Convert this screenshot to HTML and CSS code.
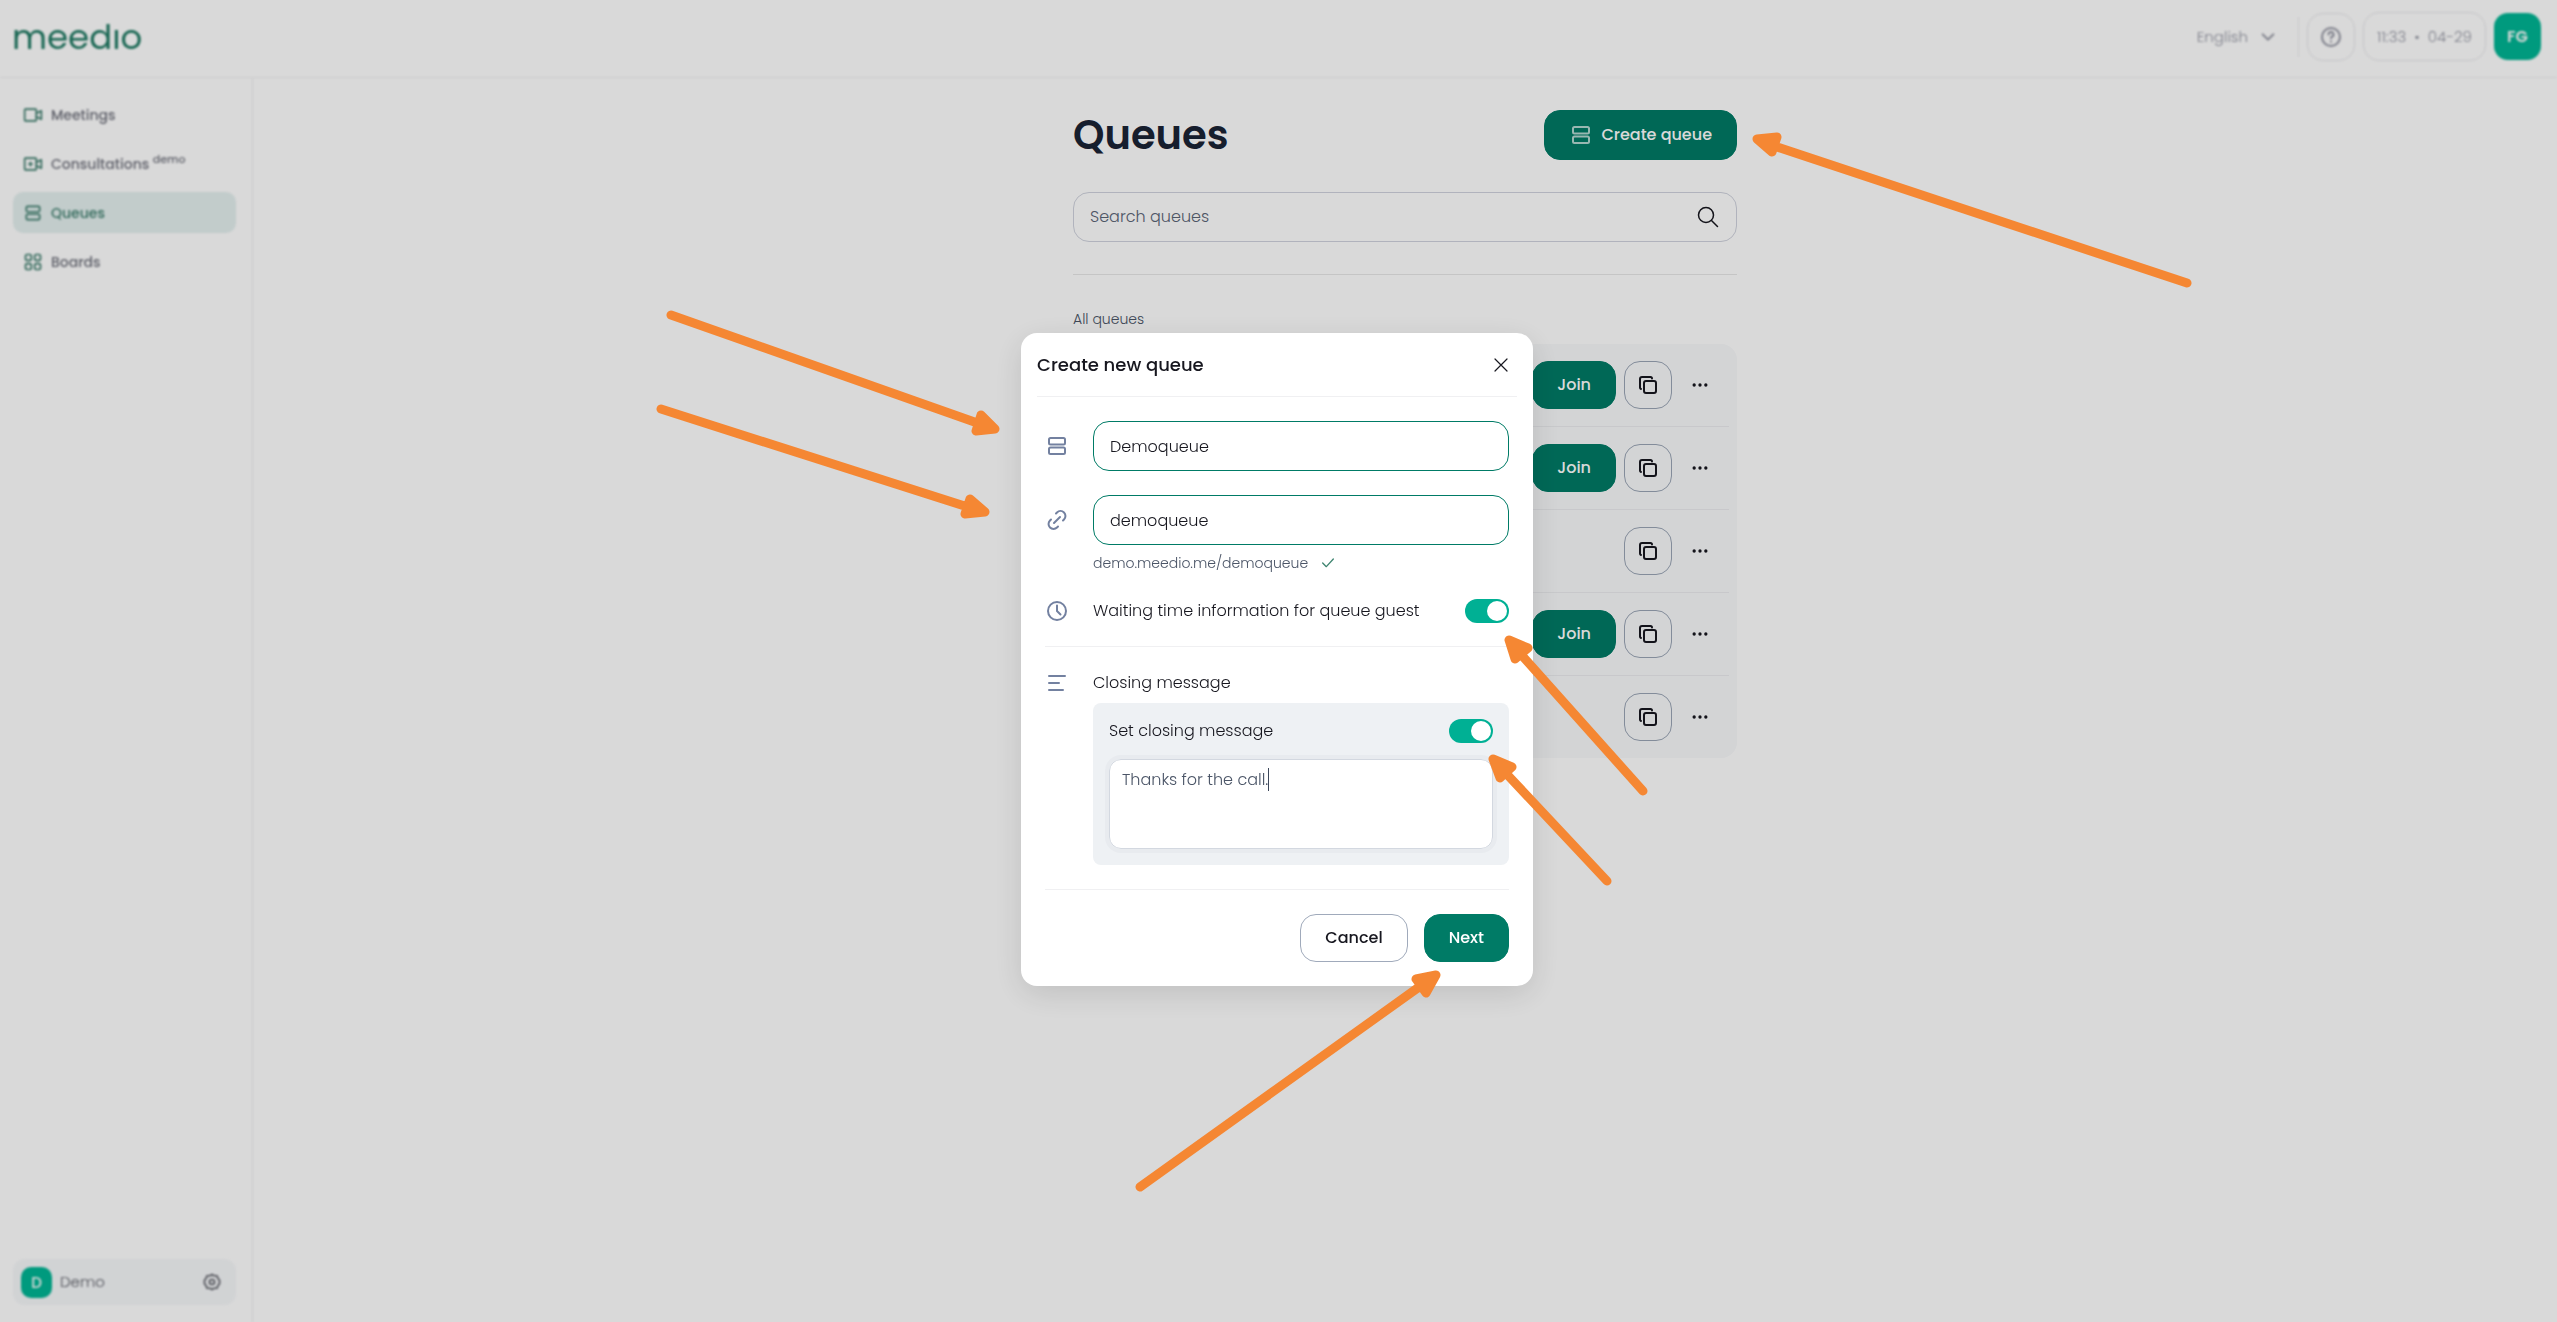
FILE: index.html
```html
<!DOCTYPE html>
<html lang="en">
<head>
<meta charset="utf-8">
<title>Queues</title>
<link rel="stylesheet" href="styles.css">
</head>
<body>
<svg class="defs" aria-hidden="true">
  <symbol id="i-queue" viewBox="0 0 24 24"><rect x="4" y="4" width="16" height="6.500" rx="1.500"/><rect x="4" y="13.500" width="16" height="6.500" rx="1.500"/></symbol>
  <symbol id="i-copy" viewBox="0 0 24 24"><rect x="8" y="8" width="12" height="12" rx="2"/><path d="M5 16a1.500 1.500 0 0 1-1-1.500V6a2 2 0 0 1 2-2h8.500A1.500 1.500 0 0 1 16 5.500"/></symbol>
  <symbol id="i-dots" viewBox="0 0 24 24"><circle cx="5" cy="12" r="1"/><circle cx="12" cy="12" r="1"/><circle cx="19" cy="12" r="1"/></symbol>
</svg>
<div class="page">
  <header class="topbar">
    <a class="logo" href="#">meedıo</a>
    <div class="tools">
      <button class="language" type="button">English
        <svg class="icon s16" viewBox="0 0 24 24"><path d="M4 8l8 8 8-8"/></svg>
      </button>
      <button class="help" type="button" aria-label="Help">
        <svg class="icon s24" viewBox="0 0 24 24"><circle cx="12" cy="12" r="9"/><path d="M9.500 9.500a2.500 2.500 0 1 1 3.600 2.200c-.8.400-1.100.8-1.100 1.600M12 16.500v.2"/></svg>
      </button>
      <div class="clock"><span>11:33</span><span>•</span><span>04-29</span></div>
      <button class="avatar" type="button">FG</button>
    </div>
  </header>
  <aside class="sidebar">
    <nav class="nav">
      <a class="item" href="#"><svg class="icon s20" viewBox="0 0 24 24"><rect x="2" y="5" width="14" height="14" rx="1"/><path d="M16 10l6-3v10l-6-3"/></svg>Meetings</a>
      <a class="item" href="#"><svg class="icon s20" viewBox="0 0 24 24"><rect x="2" y="5" width="14" height="14" rx="1"/><path d="M16 10l6-3v10l-6-3M9 10v4M7 12h4"/></svg><span>Consultations <sup>demo</sup></span></a>
      <a class="item active" href="#"><svg class="icon s20"><use href="#i-queue"/></svg>Queues</a>
      <a class="item" href="#"><svg class="icon s20" viewBox="0 0 24 24"><rect x="3" y="3" width="7" height="7" rx="2"/><rect x="14" y="3" width="7" height="7" rx="2"/><rect x="3" y="14" width="7" height="7" rx="2"/><rect x="14" y="14" width="7" height="7" rx="2"/></svg>Boards</a>
    </nav>
    <button class="account" type="button">
      <span class="badge">D</span><span class="account-name">Demo</span>
      <svg class="icon s20" viewBox="0 0 24 24"><path d="M12 3l2.500 1.500h3.500l1 3L21 10v4l-2 2.500-1 3h-3.500L12 21l-2.500-1.500H6l-1-3L3 14v-4l2-2.500 1-3h3.500z"/><circle cx="12" cy="12" r="3"/></svg>
    </button>
  </aside>
  <main class="main">
    <div class="column">
      <div class="heading">
        <h1>Queues</h1>
        <button class="btn primary create" type="button"><svg class="icon s24"><use href="#i-queue"/></svg>Create queue</button>
      </div>
      <div class="search">
        <input type="search" placeholder="Search queues" aria-label="Search queues">
        <svg class="icon s24 lens" viewBox="0 0 24 24"><circle cx="10" cy="10" r="7.500"/><path d="M15.500 15.500l6 6"/></svg>
      </div>
      <h2>All queues</h2>
      <ul class="queues">
        <li><button class="btn primary" type="button">Join</button><button class="btn square" type="button" aria-label="Copy link"><svg class="icon s24"><use href="#i-copy"/></svg></button><button class="more" type="button" aria-label="More"><svg class="icon s20"><use href="#i-dots"/></svg></button></li>
        <li><button class="btn primary" type="button">Join</button><button class="btn square" type="button" aria-label="Copy link"><svg class="icon s24"><use href="#i-copy"/></svg></button><button class="more" type="button" aria-label="More"><svg class="icon s20"><use href="#i-dots"/></svg></button></li>
        <li><button class="btn square" type="button" aria-label="Copy link"><svg class="icon s24"><use href="#i-copy"/></svg></button><button class="more" type="button" aria-label="More"><svg class="icon s20"><use href="#i-dots"/></svg></button></li>
        <li><button class="btn primary" type="button">Join</button><button class="btn square" type="button" aria-label="Copy link"><svg class="icon s24"><use href="#i-copy"/></svg></button><button class="more" type="button" aria-label="More"><svg class="icon s20"><use href="#i-dots"/></svg></button></li>
        <li><button class="btn square" type="button" aria-label="Copy link"><svg class="icon s24"><use href="#i-copy"/></svg></button><button class="more" type="button" aria-label="More"><svg class="icon s20"><use href="#i-dots"/></svg></button></li>
      </ul>
    </div>
  </main>
</div>
<div class="overlay">
  <form class="modal" role="dialog" aria-labelledby="modal-title">
    <div class="modal-head">
      <h2 id="modal-title">Create new queue</h2>
      <button class="close" type="button" aria-label="Close"><svg class="icon s16" viewBox="0 0 16 16"><path d="M2 2l12 12M14 2L2 14"/></svg></button>
    </div>
    <div class="modal-body">
      <div class="field">
        <svg class="icon s24 mark"><use href="#i-queue"/></svg>
        <input class="text" type="text" value="Demoqueue" aria-label="Queue name">
      </div>
      <div class="field">
        <svg class="icon s24 mark" viewBox="0 0 24 24"><path d="M9 15l6-6M11 5.500l1-1a4.900 4.900 0 0 1 7 7l-1 1M13 18.500l-1 1a4.900 4.900 0 0 1-7-7l1-1"/></svg>
        <input class="text" type="text" value="demoqueue" aria-label="Queue address">
      </div>
      <p class="address">demo.meedio.me/demoqueue <svg class="icon s16" viewBox="0 0 24 24"><path d="M4 12l5.500 5.500L20 6"/></svg></p>
      <div class="field waiting">
        <svg class="icon s24 mark" viewBox="0 0 24 24"><circle cx="12" cy="12" r="9"/><path d="M12 6.500V12l3.500 3.500"/></svg>
        <label for="waiting">Waiting time information for queue guest</label>
        <input class="toggle" id="waiting" type="checkbox" checked>
      </div>
      <div class="field">
        <svg class="icon s24 mark" viewBox="0 0 24 24"><path d="M4 5h16M4 12h10M4 19h14"/></svg>
        <span>Closing message</span>
      </div>
      <div class="message">
        <div class="message-head">
          <label for="closing">Set closing message</label>
          <input class="toggle" id="closing" type="checkbox" checked>
        </div>
        <div class="message-box">
          <textarea aria-label="Closing message">Thanks for the call.</textarea>
          <span class="caret"></span>
        </div>
      </div>
      <div class="actions">
        <button class="btn outline" type="button">Cancel</button>
        <button class="btn primary" type="button">Next</button>
      </div>
    </div>
  </form>
</div>
<svg class="arrows" viewBox="0 0 2557 1322" aria-hidden="true">
  <path d="M2187 283L1765 143M1757 139l20-2-5 15z"/>
  <path d="M671 315l312 110M995 429l-14-14-5 16z"/>
  <path d="M661 409l313 100M985 512l-15-13-5 15z"/>
  <path d="M1643 791L1517 650M1509 640l19 8-13 11z"/>
  <path d="M1607 881L1501 768M1493 759l19 8-12 11z"/>
  <path d="M1140 1187l286-205M1436 975l-20 4 10 14z"/>
</svg>
</body>
</html>
```
FILE: styles.css
```css
* { box-sizing: border-box; }
body {
  margin: 0;
  font-family: Poppins, Inter, sans-serif;
  font-feature-settings: "cv11";
  font-size: 16px;
  line-height: 24px;
  font-weight: 300;
  color: #17171f;
  background: #fff;
}
h1, h2, p, ul { margin: 0; padding: 0; }
a { color: inherit; text-decoration: none; }
button, input, textarea { font: inherit; font-feature-settings: inherit; color: inherit; }
button { display: flex; align-items: center; justify-content: center; background: none; border: 0; padding: 0; }
.defs { display: none; }
.icon { flex: none; fill: none; stroke: currentColor; stroke-width: 2; stroke-linecap: round; stroke-linejoin: round; }
.s16 { width: 16px; height: 16px; }
.s20 { width: 20px; height: 20px; }
.s24 { width: 24px; height: 24px; }

.page { display: grid; grid-template: auto 1fr / 253px 1fr; min-height: 100vh; }
.topbar {
  grid-column: 1 / -1;
  display: flex; align-items: center; justify-content: space-between;
  height: 78px; padding: 0 16px 4px 12px;
  border-bottom: 1px solid #f0f0f2;
  filter: blur(1px);
}
.logo { font-size: 34px; line-height: 48px; font-weight: 400; color: #1f7a63; }
.tools { display: flex; align-items: center; gap: 8px; color: #9496a3; font-size: 15px; }
.language { gap: 12px; height: 40px; padding-right: 22px; border-right: 1px solid #ececef; }
.language .icon { stroke-width: 3; }
.help { width: 48px; height: 48px; border: 1px solid #e6e6ea; border-radius: 16px; }
.clock { display: flex; align-items: center; justify-content: center; gap: 8px; width: 123px; height: 49px; border: 1px solid #e6e6ea; border-radius: 16px; }
.avatar { width: 47px; height: 47px; border-radius: 14px; background: #00b594; color: #fff; font-size: 16px; font-weight: 600; }

.sidebar {
  display: flex; flex-direction: column; justify-content: space-between;
  padding: 16px 16px 17px 13px;
  border-right: 1px solid #eeeef0;
  filter: blur(1px);
}
.nav { display: flex; flex-direction: column; gap: 8px; }
.item { display: flex; align-items: center; gap: 8px; height: 41px; padding: 0 10px; border-radius: 10px; font-size: 14px; font-weight: 500; color: #70727d; }
.item .icon { color: #3c7d6c; }
.item sup { font-size: 11px; line-height: 0; vertical-align: 6px; }
.item.active { background: #e4f0ef; color: #3c7d6c; }
.account { gap: 8px; height: 46px; padding: 0 14px 0 8px; border-radius: 12px; background: #f6f8fa; font-size: 15px; color: #5c5e66; }
.badge { width: 31px; height: 31px; line-height: 31px; border-radius: 10px; background: #00b594; color: #fff; font-weight: 500; }
.account-name { flex: 1; text-align: left; }

.main { display: flex; justify-content: center; padding-top: 32px; }
.column { width: 664px; }
.heading { display: flex; align-items: center; justify-content: space-between; }
h1 { font-size: 40px; line-height: 50px; font-weight: 600; color: #1b2436; }
.btn { height: 48px; padding: 0 24px; border: 1px solid transparent; border-radius: 16px; font-weight: 500; }
.primary { border-color: #007b66; background: #007b66; color: #fff; }
.create { height: 50px; gap: 8px; }
.create .icon { opacity: .7; }
.search {
  display: flex; align-items: center; height: 50px; margin: 32px 0; padding: 0 16px;
  border: 1px solid #d0d3de; border-radius: 16px;
}
.search input { flex: 1; padding: 0; border: 0; outline: 0; background: none; }
.search input::placeholder { color: #5b6577; }
.column .lens { stroke-width: 1.5; }
.column h2 { padding-top: 30px; border-top: 1px solid #e8e8e8; font-size: 14px; line-height: 28px; font-weight: 300; color: #4b5567; }
.queues { margin-top: 11px; padding: 0 8px; border-radius: 16px; background: #f8f9fb; list-style: none; }
.queues li { display: flex; justify-content: flex-end; gap: 8px; height: 83px; padding: 17px 0; border-bottom: 1px solid #ebecef; }
.queues li:last-child { height: 82px; border-bottom: 0; }
.square { width: 48px; padding: 0; border-color: #9aa5b5; }
.more { width: 40px; height: 48px; margin-right: 9px; }

.overlay {
  position: fixed; inset: 0;
  display: flex; align-items: center; justify-content: center;
  padding: 0 3px 3px 0;
  background: rgba(0, 0, 0, .15);
}
.modal { width: 512px; padding: 0 16px 24px; border-radius: 16px; background: #fff; box-shadow: 0 8px 32px rgba(0, 0, 0, .12); }
.modal-head { display: flex; align-items: center; justify-content: space-between; height: 64px; padding-right: 8px; border-bottom: 1px solid #f0f0f2; }
.modal-head h2 { font-size: 18px; font-weight: 500; }
.close .icon { stroke-width: 1.2; }
.modal-body { padding: 24px 8px 0; }
.field { display: flex; align-items: center; gap: 24px; }
.field + .field { margin-top: 24px; }
.mark { color: #7381a0; }
.text { flex: 1; min-width: 0; height: 50px; padding: 0 16px; border: 1px solid #007b66; border-radius: 16px; outline: 0; background: #fff; }
.address { display: flex; align-items: center; gap: 12px; padding: 6px 0 0 48px; font-size: 14px; color: #4b5567; }
.address .icon { color: #3f8570; }
.waiting { height: 72px; border-bottom: 1px solid #f0f0f2; }
.waiting label { flex: 1; }
.toggle { flex: none; appearance: none; display: flex; width: 44px; height: 24px; margin: 0; padding: 2px; border-radius: 12px; background: #00b094; }
.toggle::before { content: ""; width: 20px; height: 20px; margin-left: auto; border-radius: 50%; background: #fff; }
.message { margin: 8px 0 24px 48px; padding: 16px; border-radius: 8px; background: #eef1f4; }
.message-head { display: flex; align-items: center; justify-content: space-between; }
.message-box { position: relative; display: flex; margin-top: 16px; }
textarea { flex: 1; height: 90px; padding: 8px 12px; border: 1px solid #d3d8e0; border-radius: 12px; outline: 4px solid #e8ebef; resize: none; background: #fff; color: #4b5567; }
.caret { position: absolute; left: 159px; top: 9px; width: 1px; height: 23px; background: #3c475a; }
.actions { display: flex; justify-content: flex-end; gap: 16px; padding-top: 24px; border-top: 1px solid #f0f0f2; }
.outline { border-color: #a0aabb; background: #fff; }
.arrows { position: absolute; left: 0; top: 0; width: 100%; height: auto; pointer-events: none; fill: #f58733; stroke: #f58733; stroke-width: 9; stroke-linecap: round; stroke-linejoin: round; }
```
